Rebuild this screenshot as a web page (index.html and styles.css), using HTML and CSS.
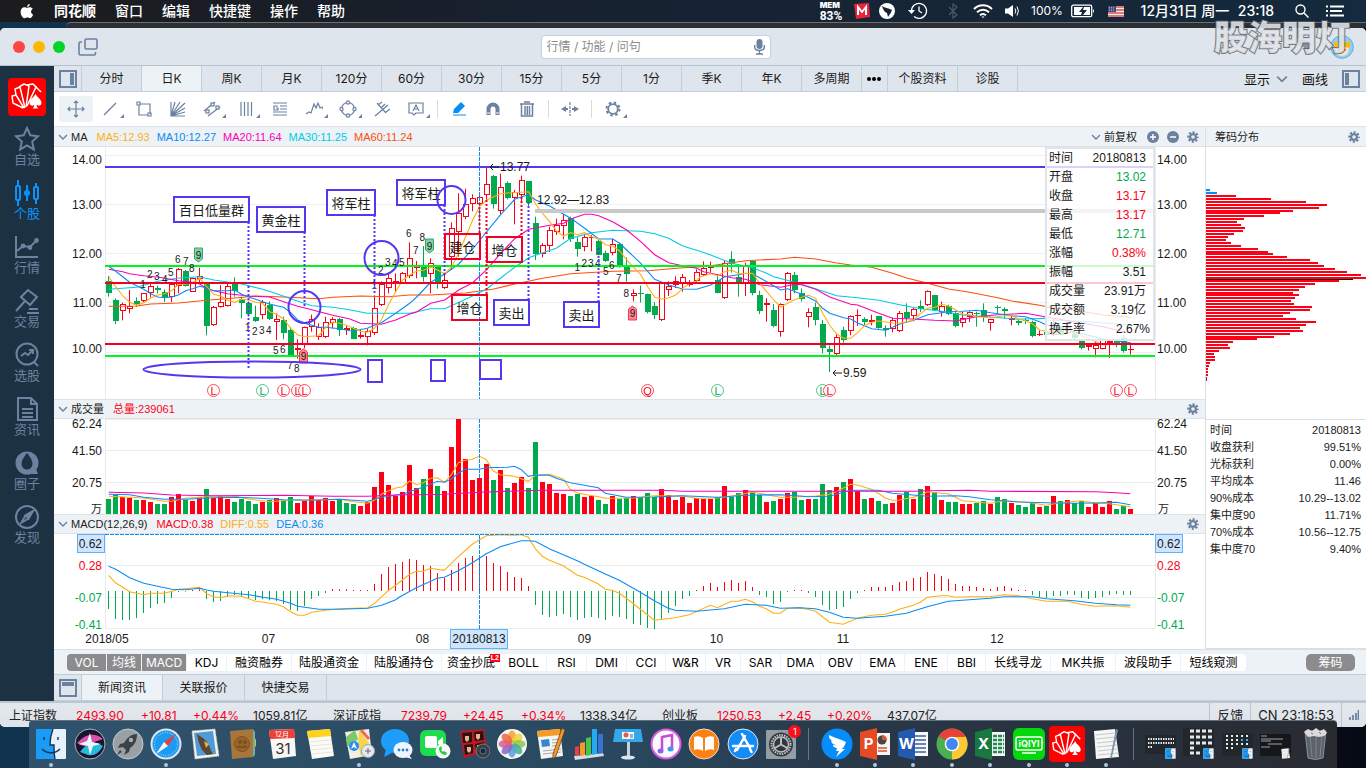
FILE: index.html
```html
<!DOCTYPE html>
<html lang="zh-CN">
<head>
<meta charset="utf-8">
<title>同花顺</title>
<link rel="stylesheet" href="styles.css">
</head>
<body>
<svg class="defs" width="0" height="0" aria-hidden="true">
  <symbol id="gear" viewBox="0 0 14 14"><circle cx="7" cy="7" r="3.4" fill="none" stroke="currentColor" stroke-width="2.6"/><circle cx="7" cy="7" r="5.6" fill="none" stroke="currentColor" stroke-width="2.4" stroke-dasharray="2.4 2" stroke-dashoffset="1.2"/></symbol>
  <symbol id="chev" viewBox="0 0 10 8"><path d="M1 2l4 4 4-4" fill="none" stroke="currentColor" stroke-width="1.4"/></symbol>
  <symbol id="cards" viewBox="0 0 38 38"><rect width="38" height="38" rx="4" fill="#fe0000"/><g fill="none" stroke="#fff" stroke-width="1.5" stroke-linejoin="round"><path d="M15 30L5 25l-1-7 4-1 8 13"/><path d="M8 17l-1-6 5-2 5 21"/><path d="M11 9l5-3 5 2-3 21"/><path d="M19 7l6-1 3 3-9 19"/><path d="M27 8l6 6"/></g><path fill="#fff" d="M27.500 16c2 4 6 5 6 9 0 3-4 3.500-5 1.500.2 2 1 3 2 4h-6c1-1 1.800-2 2-4-1 2-5 1.500-5-1.500 0-4 4-5 6-9z"/></symbol>
  <symbol id="finder" viewBox="0 0 32 32"><rect x="1" y="1" width="30" height="30" rx="1" fill="#e6f2fb"/><path d="M1 1h17c-2 5-3 10-3 16h4c0 5 0 9 1 14H1z" fill="#1a9bf5"/><path d="M18 1c-2 5-3 10-3 16h4c0 5 0 9 1 14M7 21c5 5 13 5 18 0M9 9v3M23 9v3" fill="none" stroke="#153450" stroke-width="1.400"/></symbol>
  <symbol id="notepad" viewBox="0 0 32 32"><path d="M4 3l21-2 4 28-23 2z" fill="#f6f6f4"/><path d="M6 7l19-2M6 11l20-2M7 15l20-2M7 19l20-2M8 23l19-2M8 27l20-2" stroke="#b9bcc0" stroke-width=".8"/><path d="M26 1l2 1-6 27-2 2z" fill="#7796ad"/></symbol>
</svg>

<header class="menubar">
  <nav class="menus">
    <svg class="apple" viewBox="0 0 14 16" width="14" height="16"><path fill="#fff" d="M9.800 1c.1 1.600-1.300 3-2.700 3C7 2.500 8.300 1.100 9.800 1zM7.200 4.800c.8 0 1.500-.6 2.700-.6 1.100 0 2.200.6 2.900 1.500-2.500 1.500-2.100 4.900.4 5.900-.7 1.800-1.800 3.600-3.100 3.600-1.100 0-1.400-.7-2.800-.7-1.300 0-1.700.7-2.700.7C2.700 15.200.6 12 .6 8.900.6 6 2.400 4.300 4.300 4.300c1.300 0 2.100.5 2.900.5z"/></svg>
    <a href="#" class="app">同花顺</a><a href="#">窗口</a><a href="#">编辑</a><a href="#">快捷键</a><a href="#">操作</a><a href="#">帮助</a>
  </nav>
  <div class="tray">
    <span class="mem"><b>MEM</b><b>83%</b></span>
    <svg width="16" height="16" viewBox="0 0 16 16"><path d="M0 1l15-1 1 14-14 2z" fill="#e8243c"/><path d="M4 12V4l4 5 4-5v8" fill="none" stroke="#fff" stroke-width="2"/></svg>
    <svg width="16" height="16" viewBox="0 0 16 16"><circle cx="8" cy="8" r="8" fill="#fff"/><path d="M3 3c3 2 6 2 10 4-1 2-1 3-2 4l-2 3-1-4c-3-1-4-4-5-7z" fill="#142232"/></svg>
    <svg width="20" height="18" viewBox="0 0 20 18"><path d="M3.500 9a7.500 7.500 0 1 1 2.500 5.500M11 4.500V9l3 2" fill="none" stroke="#fff" stroke-width="1.300"/><path d="M0 8h7l-3.500 4z" fill="#fff"/></svg>
    <svg width="12" height="16" viewBox="0 0 12 16"><path d="M2 4l8 8-4 3V1l4 3-8 8" fill="none" stroke="#4b5866" stroke-width="1.200"/></svg>
    <svg width="20" height="16" viewBox="0 0 20 16"><g fill="none" stroke="#fff" stroke-width="2"><path d="M1 6c5-5 13-5 18 0M4 9.300c3.500-3.400 8.500-3.400 12 0M7 12.300c1.800-1.600 4.200-1.600 6 0"/></g><path d="M8.500 13.500h3L10 15z" fill="#fff"/></svg>
    <svg width="14" height="14" viewBox="0 0 14 14"><path d="M0 4.500h3L8 1v12L3 9.500H0z" fill="#fff"/><path d="M10 4.500q1.600 2.500 0 5M12 2.500q2.800 4.500 0 9" fill="none" stroke="#fff"/></svg>
    <span class="pct">100%</span>
    <svg width="24" height="14" viewBox="0 0 24 14"><rect x=".7" y="1.200" width="20" height="11.500" rx="1.500" fill="none" stroke="#fff" stroke-width="1.300"/><path d="M3 3h9L8 8h3l-1 3H3zM13 3h6v8h-7l4-5h-4z" fill="#fff"/><path d="M22 5q2 2 0 4z" fill="#fff"/></svg>
    <svg width="16" height="11" viewBox="0 0 16 11"><rect width="16" height="11" fill="#f1eeee"/><path d="M0 1h16M0 4h16M0 7h16M0 10h16" stroke="#d1554f" stroke-width="1.500"/><rect width="8" height="6" fill="#42477e"/><path d="M1 1.500h6M1 3h6M1 4.500h6" stroke="#c5c8df" stroke-width=".7" stroke-dasharray="1 1"/></svg>
    <span class="date">12月31日 周一</span>
    <span class="date">23:18</span>
    <svg width="14" height="14" viewBox="0 0 14 14"><circle cx="5.500" cy="5.500" r="4.500" fill="none" stroke="#fff" stroke-width="1.400"/><path d="M9 9l4.500 4.500" stroke="#fff" stroke-width="1.500"/></svg>
    <svg width="18" height="12" viewBox="0 0 18 12"><path d="M0 1.500h2M0 6h2M0 10.500h2M4 1.500h14M4 6h12M4 10.500h14" stroke="#fff" stroke-width="1.800"/></svg>
  </div>
</header>
<div class="behind"></div>

<div class="window">
  <div class="titlebar">
    <div class="lights"><i class="close"></i><i class="min"></i><i class="max"></i>
      <svg width="20" height="18" viewBox="0 0 20 18"><g fill="none" stroke="#6c80a0" stroke-width="1.600"><rect x="7" y="1" width="12" height="10" rx="1.500"/><path d="M4 4H2.500Q1 4 1 5.500v10Q1 17 2.500 17H16q1.500 0 1.500-1.500V14"/></g></svg>
    </div>
    <label class="search"><input type="text" placeholder="行情 / 功能 / 问句" aria-label="搜索"><svg width="11" height="16" viewBox="0 0 11 16"><rect x="2.500" y="0" width="6" height="10" rx="3" fill="#6c80a0"/><path d="M.7 6v2q0 3.500 4.800 3.500T10.300 8V6M5.500 11v4M2 15h7" fill="none" stroke="#6c80a0" stroke-width="1.400"/></svg></label>
    <div class="account">
      <svg width="20" height="20" viewBox="0 0 20 20"><path d="M1 5l8-3 10 5-3 2-1 7h-4l-1-6-5-1z" fill="#8d8f99"/></svg>
      <svg width="24" height="24" viewBox="0 0 24 24"><circle cx="12" cy="12" r="11.300" fill="#8ed0f7" stroke="#5eaede"/><path d="M5 12h14q0 9-7 9t-7-9z" fill="#fbe1bd"/><path d="M4 13V6l4 2 4-4 4 4 4-2v7q-8-3-16 0z" fill="#ffb900"/><path d="M9 14v2M15 14v2" stroke="#6b4d2d"/></svg>
    </div>
  </div>

  <div class="body">
    <aside class="side">
      <svg class="logo" width="38" height="38"><use href="#cards"/></svg>
      <a href="#"><svg width="26" height="26" viewBox="0 0 26 26"><path d="M13 2l3.300 7.300 7.700.9-5.800 5.300 1.600 7.900-6.800-4-6.800 4 1.600-7.900L2 10.200l7.700-.9z"/></svg>自选</a>
      <a href="#" class="on"><svg width="26" height="26" viewBox="0 0 26 26"><path d="M4 0v6M4 20v6M22 3v4M22 19v5M13 5v16"/><rect x="2" y="6" width="4" height="14" rx="1"/><rect x="20" y="7" width="4" height="12" rx="1"/><circle cx="13" cy="13" r="2" fill="currentColor"/></svg>个股</a>
      <a href="#"><svg width="26" height="26" viewBox="0 0 26 26"><path d="M2 2v21h22M3 17l6-5 7 1 7-7"/><circle cx="9" cy="12" r="1.400" fill="currentColor"/><circle cx="16" cy="13.500" r="1.400" fill="currentColor"/><circle cx="22.500" cy="6.500" r="1.400" fill="currentColor"/></svg>行情</a>
      <a href="#"><svg width="26" height="26" viewBox="0 0 26 26"><path d="M7 9l7-7 9 7-7 8zM11 13L2 23M13 25h12M15 21h9"/></svg>交易</a>
      <a href="#"><svg width="26" height="26" viewBox="0 0 26 26"><circle cx="13" cy="12" r="10.500"/><path d="M20 20l4 4M7 14l4-3 3 2 5-5m-4 0h4v4"/></svg>选股</a>
      <a href="#"><svg width="26" height="26" viewBox="0 0 26 26"><path d="M4 2h13l6 6v16H4zM17 2v6h6M8 13h11M8 17h11M8 21h11"/></svg>资讯</a>
      <a href="#"><svg width="26" height="26" viewBox="0 0 26 26"><circle cx="13" cy="13" r="11.500" fill="currentColor" stroke="none"/><path d="M17 24h7l-2-5z" fill="currentColor" stroke="none"/><path d="M13 3c4 5 5.500 8 5.500 11a5.500 5.500 0 0 1-11 0C7.500 11 9 8 13 3z" fill="#1c3242" stroke="none"/></svg>圈子</a>
      <a href="#"><svg width="26" height="26" viewBox="0 0 26 26"><circle cx="13" cy="13" r="11"/><path d="M18.500 7.500l-4 7-7 4 4-7z"/><path d="M18.500 7.500l-4 7-3-3z" fill="currentColor"/></svg>发现</a>
    </aside>

    <main class="main">
      <nav class="tabs">
        <button class="pane" aria-label="右侧栏"><svg width="18" height="18" viewBox="0 0 18 18"><rect x="1" y="1" width="16" height="16" fill="none" stroke="#6c80a0" stroke-width="2"/><rect x="11" y="3" width="4" height="12" fill="#6c80a0"/></svg></button>
        <button>分时</button><button class="on">日K</button><button>周K</button><button>月K</button><button>120分</button><button>60分</button><button>30分</button><button>15分</button><button>5分</button><button>1分</button><button>季K</button><button>年K</button><button>多周期</button><button class="more" aria-label="更多"><svg width="16" height="6" viewBox="0 0 16 6"><circle cx="3" cy="3" r="2"/><circle cx="8" cy="3" r="2"/><circle cx="13" cy="3" r="2"/></svg></button><button class="wide">个股资料</button><button>诊股</button>
        <span class="tools-right"><button>显示 <svg width="12" height="10"><use href="#chev"/></svg></button><button>画线</button><button aria-label="左侧栏"><svg width="18" height="18" viewBox="0 0 18 18"><rect x="1" y="1" width="16" height="16" fill="none" stroke="#6c80a0" stroke-width="2"/><rect x="3" y="3" width="4" height="12" fill="#6c80a0"/></svg></button></span>
      </nav>

      <div class="toolbar">
        <button class="on" aria-label="移动"><svg viewBox="0 0 18 18"><path d="M9 1v16M1 9h16M7 3l2-2 2 2M7 15l2 2 2-2M3 7L1 9l2 2M15 7l2 2-2 2"/></svg></button>
        <button class="dd" aria-label="直线"><svg viewBox="0 0 18 18"><path d="M3 15L15 3"/></svg></button>
        <button aria-label="矩形"><svg viewBox="0 0 18 18"><path d="M5 4h10v10M13 15H4V5M2 2h3v3H2zM13 13h3v3h-3z"/></svg></button>
        <button aria-label="扇形"><svg viewBox="0 0 18 18"><path d="M2 2v14h14M2 16L6 2M2 16l9-14M2 16L16 3M2 16l14-8M2 16l14-4"/></svg></button>
        <button class="dd" aria-label="通道"><svg viewBox="0 0 18 18"><path d="M1 11l11-9M5 16L17 7"/><rect x="8" y="3" width="3" height="3" fill="#fff"/><rect x="13" y="6" width="3" height="3" fill="#fff"/><rect x="3" y="10" width="3" height="3" fill="#fff"/></svg></button>
        <button class="dd" aria-label="周期线"><svg viewBox="0 0 18 18"><path d="M4 2v14M7.500 2v14M11 2v14M14.500 2v14"/></svg></button>
        <button aria-label="分割"><svg viewBox="0 0 18 18"><path d="M2 3h14M9 6h7M9 9h7M2 12h14M2 15h14M7 6H3v4h4V8H5"/></svg></button>
        <button class="dd" aria-label="波浪"><svg viewBox="0 0 18 18"><path d="M1 14l3-2 2 1 3-9 2 4 2-5 2 5 2-1 1 2"/></svg></button>
        <button class="dd" aria-label="圆"><svg viewBox="0 0 18 18"><circle cx="9" cy="9" r="6.500"/><g fill="#fff"><circle cx="2.500" cy="9" r="1.600"/><circle cx="15.500" cy="9" r="1.600"/><circle cx="9" cy="2.500" r="1.600"/><circle cx="9" cy="15.500" r="1.600"/></g></svg></button>
        <button aria-label="叉线"><svg viewBox="0 0 18 18"><path d="M2 16L15 5M4 3l9 10M5 5l4-3M8 8l4-4M13 12l4-3"/></svg></button>
        <button class="dd" aria-label="文字"><svg viewBox="0 0 18 18"><path d="M2 3h14v10H9l-2 2-2-2H2zM6 11l3-6 3 6M7 9h4"/></svg></button>
        <hr>
        <button class="pen" aria-label="画笔"><svg viewBox="0 0 18 18"><path d="M3 13l1-4 7-7 4 4-7 7z" fill="currentColor" stroke="none"/><path d="M3 15h13"/></svg></button>
        <button aria-label="磁铁"><svg viewBox="0 0 18 18"><path d="M4.500 15V9a4.500 4.500 0 0 1 9 0v6" stroke-width="4"/><path d="M3 13h3M12 13h3" stroke="#fff"/></svg></button>
        <button aria-label="删除"><svg viewBox="0 0 18 18"><path d="M2 4h14M6 2h6M3.500 4v12h11V4M7 6v9M9.300 6v9M11.500 6v9" stroke-width="1.500"/></svg></button>
        <hr>
        <button aria-label="压缩"><svg viewBox="0 0 18 18"><path d="M9 2v14" stroke-dasharray="3 1"/><path d="M0 9l5-3v2h2v2H5v2zM18 9l-5-3v2h-2v2h2v2z" fill="currentColor" stroke="none"/></svg></button>
        <hr>
        <button class="dd" aria-label="设置"><svg viewBox="0 0 18 18"><circle cx="9" cy="9" r="4.800" stroke-width="1.800"/><circle cx="9" cy="9" r="6.500" stroke-width="2" stroke-dasharray="2.500 2.600"/></svg></button>
      </div>

      <div class="board">
        <section class="charts">
          <div class="head first"><svg width="10" height="8"><use href="#chev"/></svg><b class="name">MA</b><span class="c5">MA5:12.93</span><span class="c10">MA10:12.27</span><span class="c20">MA20:11.64</span><span class="c30">MA30:11.25</span><span class="c60">MA60:11.24</span>
            <span class="ops"><svg width="10" height="8"><use href="#chev"/></svg><span class="fq">前复权</span><svg width="12" height="12" viewBox="0 0 12 12"><circle cx="6" cy="6" r="6" fill="currentColor"/><path d="M6 3v6M3 6h6" stroke="#fff" stroke-width="1.500"/></svg><svg width="12" height="12" viewBox="0 0 12 12"><circle cx="6" cy="6" r="6" fill="currentColor"/><path d="M3 6h6" stroke="#fff" stroke-width="1.500"/></svg><svg width="12" height="12"><use href="#gear"/></svg></span></div>
          <div class="price">
            <svg id="price" class="plot" viewBox="54 147 1151 252"></svg>
            <table class="tip">
              <tr><th>时间</th><td>20180813</td></tr>
              <tr><th>开盘</th><td class="dn">13.02</td></tr>
              <tr><th>收盘</th><td class="up">13.17</td></tr>
              <tr><th>最高</th><td class="up">13.17</td></tr>
              <tr><th>最低</th><td class="dn">12.71</td></tr>
              <tr><th>涨幅</th><td class="up">0.38%</td></tr>
              <tr><th>振幅</th><td>3.51</td></tr>
              <tr><th>成交量</th><td>23.91万</td></tr>
              <tr><th>成交额</th><td>3.19亿</td></tr>
              <tr><th>换手率</th><td>2.67%</td></tr>
            </table>
          </div>
          <div class="head"><svg width="10" height="8"><use href="#chev"/></svg><b class="name">成交量</b><span class="up">总量:239061</span><span class="ops"><svg width="12" height="12"><use href="#gear"/></svg></span></div>
          <svg id="volume" class="plot" viewBox="54 419 1151 95"></svg>
          <div class="head"><svg width="10" height="8"><use href="#chev"/></svg><b class="name">MACD(12,26,9)</b><span class="up">MACD:0.38</span><span class="c5">DIFF:0.55</span><span class="c10">DEA:0.36</span><span class="ops"><svg width="12" height="12"><use href="#gear"/></svg></span></div>
          <svg id="macd" class="plot" viewBox="54 534 1151 115"></svg>
        </section>
        <section class="chips">
          <div class="head first"><span class="title">筹码分布</span><span class="ops"><svg width="12" height="12"><use href="#gear"/></svg></span></div>
          <svg id="chips" class="plot" viewBox="1206 147 160 272"></svg>
          <table class="stats">
            <tr><th>时间</th><td>20180813</td></tr>
            <tr><th>收盘获利</th><td>99.51%</td></tr>
            <tr><th>光标获利</th><td>0.00%</td></tr>
            <tr><th>平均成本</th><td>11.46</td></tr>
            <tr><th>90%成本</th><td>10.29--13.02</td></tr>
            <tr><th>集中度90</th><td>11.71%</td></tr>
            <tr><th>70%成本</th><td>10.56--12.75</td></tr>
            <tr><th>集中度70</th><td>9.40%</td></tr>
          </table>
        </section>
      </div>

      <div class="indicators">
        <div class="list"><button class="on l">VOL</button><button class="on">均线</button><button class="on">MACD</button><button>KDJ</button><button>融资融券</button><button>陆股通资金</button><button>陆股通持仓</button><button class="hot">资金抄底<i>L2</i></button><button>BOLL</button><button>RSI</button><button>DMI</button><button>CCI</button><button>W&amp;R</button><button>VR</button><button>SAR</button><button>DMA</button><button>OBV</button><button>EMA</button><button>ENE</button><button>BBI</button><button>长线寻龙</button><button>MK共振</button><button>波段助手</button><button class="r">短线窥测</button></div>
        <button class="chip-btn">筹码</button>
      </div>
      <nav class="tabs news"><button class="pane" aria-label="展开"><svg width="18" height="18" viewBox="0 0 18 18"><rect x="1" y="1" width="16" height="16" fill="none" stroke="#6c80a0" stroke-width="2"/><rect x="3" y="3" width="12" height="4" fill="#6c80a0"/></svg></button><button class="on">新闻资讯</button><button>关联报价</button><button>快捷交易</button></nav>
    </main>
  </div>

  <footer class="status">
    <div class="quotes"><span>上证指数</span><span class="up">2493.90</span><span class="up">+10.81</span><span class="up">+0.44%</span><span>1059.81亿</span><span>深证成指</span><span class="up">7239.79</span><span class="up">+24.45</span><span class="up">+0.34%</span><span>1338.34亿</span><span>创业板</span><span class="up">1250.53</span><span class="up">+2.45</span><span class="up">+0.20%</span><span>437.07亿</span></div>
    <a href="#" class="cell">反馈</a><span class="cell">CN 23:18:53</span><span class="cell"><svg width="10" height="10" viewBox="0 0 10 10"><path d="M1 10V7M4 10V5M7 10V3M9.500 10V0" stroke="#6c80a0" stroke-width="1.800"/></svg></span>
  </footer>
</div>

<div class="watermark">股海明灯</div>

<div class="dock">
  <span class="run"><svg><use href="#finder"/></svg></span>
  <span><svg viewBox="0 0 32 32"><circle cx="16" cy="16" r="15" fill="#17162c" stroke="#aeb4c4"/><path d="M3 15q13-14 26-4-8 2-13 6Q9 20 3 15z" fill="#dd4fae"/><path d="M6 24q10-14 23-6-6 11-15 9z" fill="#29b9d9"/><path d="M16 5l2 9 9 2-8 2-3 9-2-9-9-2 8-3z" fill="#e9f9ff"/></svg></span>
  <span><svg viewBox="0 0 32 32"><circle cx="16" cy="16" r="15" fill="#9aa1a5" stroke="#c5cacc"/><path d="M25 6c-6 0-10 4-13 9l-4 1-2 4 5-1 3 3-2 5 5-3 1-4c5-3 7-8 7-14zM8 22l-3 5 5-3z" fill="#3b4145"/><circle cx="19" cy="12" r="2.200" fill="#a8afb3"/></svg></span>
  <span class="run"><svg viewBox="0 0 32 32"><circle cx="16" cy="16" r="14.500" fill="#1d9bf0" stroke="#dfe5ea" stroke-width="2"/><circle cx="16" cy="16" r="11.500" fill="none" stroke="#bfe4fc" stroke-dasharray="1 1.500"/><path d="M26 6L14 14l4 4z" fill="#f23b36"/><path d="M6 26l8-12 4 4z" fill="#f4f6f8"/></svg></span>
  <span><svg viewBox="0 0 32 32"><path d="M3 3l23-2 4 27-24 3z" fill="#f4f2ea" stroke="#c9c9c0" stroke-dasharray="1.500 1"/><path d="M5 5l19-2 3 23-19 2z" fill="#4e9bd8"/><path d="M8 6c4 3 7 4 10 8 3 4 3 8 6 12l-6 1-5-5c-2-4-4-9-5-16z" fill="#5b4630"/><path d="M15 13l5 3-3 4z" fill="#e6b255"/></svg></span>
  <span><svg viewBox="0 0 32 32"><path d="M3 3l23-2v28L5 31z" fill="#a8753a"/><path d="M26 1l2 3v23l-2 2z" fill="#6ab4a4"/><path d="M28 10l1 2v6l-1 1z" fill="#e5b43e"/><circle cx="15" cy="16" r="7.500" fill="#966529" stroke="#815420"/><circle cx="13" cy="14" r="2" fill="#7b4f1f"/><circle cx="18" cy="14" r="2" fill="#7b4f1f"/><path d="M9 20q3-5 6-1 3-4 6 1z" fill="#7b4f1f"/></svg></span>
  <span><svg viewBox="0 0 32 32"><path d="M3 2l25-1 2 27-23 3z" fill="#f7f7f7"/><path d="M3 2l25-1 1 9-25 1z" fill="#ee4037"/><text x="16" y="9" class="t7">12月</text><text x="17" y="26" class="t16">31</text></svg></span>
  <span><svg viewBox="0 0 32 32"><path d="M3 3l23-2 4 27-22 3z" fill="#fbfaf5"/><path d="M3 3l23-2 1 7-23 2z" fill="#ffd21d"/><path d="M5 14l22-2M6 18l22-2M6 22l22-2M7 26l22-2" stroke="#ddd" stroke-width=".7"/></svg></span>
  <span class="run"><svg viewBox="0 0 32 32"><path d="M2 4l24-3 3 26-22 4z" fill="#f2efe2"/><path d="M3 9l9-7 3 9-5 5-6 3z" fill="#7acb68"/><path d="M16 2l10 13-8 14-3-13z" fill="#f6d54c"/><path d="M18 2l8 9" stroke="#ee6b5a" stroke-width="3"/><circle cx="11" cy="18" r="5" fill="#2e8df1"/><path d="M11 14l3 7-3-2-3 2z" fill="#fff"/><circle cx="25" cy="23" r="6.500" fill="#e6e9ed" stroke="#9da7b0"/><path d="M22 23h6M25 20v6" stroke="#667"/></svg></span>
  <span><svg viewBox="0 0 32 32"><ellipse cx="14" cy="13" rx="14" ry="12" fill="#1e9dfa"/><path d="M5 21l-2 8 8-4z" fill="#1e9dfa"/><ellipse cx="22" cy="22" rx="9.500" ry="8" fill="#eef4fb"/><path d="M28 27l3 4-7-2z" fill="#eef4fb"/><g fill="#2c80d0"><circle cx="18" cy="22" r="1.400"/><circle cx="22" cy="22" r="1.400"/><circle cx="26" cy="22" r="1.400"/></g></svg></span>
  <span><svg viewBox="0 0 32 32"><rect x="1" y="2" width="26" height="26" rx="6" fill="#1fdc4d"/><rect x="6" y="8" width="12" height="12" rx="2" fill="#fff"/><path d="M19 13l5-4v10l-5-3z" fill="#fff"/><circle cx="24" cy="23" r="7.500" fill="#f6f8f6"/><path d="M20 20c0 4 3 7 7 7l1-2-3-2-1 1-2-2 1-1-1-3z" fill="#1eca47"/></svg></span>
  <span><svg viewBox="0 0 32 32"><path d="M2 3l24-2 3 22-23 7z" fill="#c01822"/><g fill="#2b1310"><path d="M4 5l10-1v10l-9 1zM16 4l9-1 1 9-9 1zM6 17l9-1v9l-8 2zM17 16l9-2v9l-8 1z"/></g><g fill="#e9b299"><path d="M7 8h4v4l-2 2-2-2zM18 6h4v4l-2 2-2-2zM9 19h4v4l-2 2-2-2zM19 17h4v4h-4z"/></g><circle cx="25" cy="23" r="7" fill="#393c42" stroke="#787c83"/><circle cx="25" cy="23" r="3" fill="#14283c" stroke="#56728a"/></svg></span>
  <span><svg viewBox="0 0 32 32"><circle cx="16" cy="16" r="15" fill="#f6f5f3"/><g fill-opacity=".85"><ellipse cx="16" cy="9" rx="4" ry="6.500" fill="#f6a02c"/><ellipse cx="16" cy="9" rx="4" ry="6.500" fill="#ecd532" transform="rotate(45 16 16)"/><ellipse cx="16" cy="9" rx="4" ry="6.500" fill="#8fc850" transform="rotate(90 16 16)"/><ellipse cx="16" cy="9" rx="4" ry="6.500" fill="#41b489" transform="rotate(135 16 16)"/><ellipse cx="16" cy="9" rx="4" ry="6.500" fill="#5b9de0" transform="rotate(180 16 16)"/><ellipse cx="16" cy="9" rx="4" ry="6.500" fill="#8367c2" transform="rotate(225 16 16)"/><ellipse cx="16" cy="9" rx="4" ry="6.500" fill="#d15ca0" transform="rotate(270 16 16)"/><ellipse cx="16" cy="9" rx="4" ry="6.500" fill="#ef6547" transform="rotate(315 16 16)"/></g></svg></span>
  <span><svg viewBox="0 0 32 32"><path d="M2 3l23-2 3 27-22 3z" fill="#f4f4f1"/><path d="M2 3l23-2 1 6-23 2z" fill="#f49b2a"/><path d="M6 12l8-1 1 7-8 1z" fill="#3585d0"/><path d="M17 12l8-1M17 15l8-1M17 18l8-1M8 23l18-2M8 26l18-2" stroke="#aaa"/><path d="M27 0l3 2-9 26-3 3v-5z" fill="#f19829" stroke="#593817" stroke-width=".7"/></svg></span>
  <span><svg viewBox="0 0 32 32"><path d="M1 28l29-3 1 3-29 4z" fill="#d6dce0"/><path d="M2 19l4-1v9l-4 1z" fill="#ef3c48"/><path d="M7 15l5-1v13l-5 1z" fill="#f99822"/><path d="M13 10l5-1v18l-5 1z" fill="#43c64d"/><path d="M19 1l5 0v25l-5 1z" fill="#24aaf2"/><path d="M25 6l5 0v19l-5 1z" fill="#3971d3"/></svg></span>
  <span><svg viewBox="0 0 32 32"><path d="M3 1h26l2 13H1z" fill="#36a8ea"/><path d="M10 4h12v7H10z" fill="#f3f8fa"/><circle cx="14" cy="7" r="2.500" fill="#e65a56"/><path d="M18 7h3M18 9h3" stroke="#36a"/><path d="M15 14h3v14h-3z" fill="#c8d4db"/><ellipse cx="16" cy="29.500" rx="7" ry="2" fill="#dce5ea"/></svg></span>
  <span><svg viewBox="0 0 32 32"><circle cx="16" cy="16" r="14.500" fill="#fbf9fd" stroke="#d65be0" stroke-width="2"/><path d="M12 23V9l10-2v14" fill="none" stroke="#c34bd8" stroke-width="2.500"/><ellipse cx="10.500" cy="23" rx="3" ry="2.500" fill="#8b62ef"/><ellipse cx="20.500" cy="21" rx="3" ry="2.500" fill="#3f9bea"/></svg></span>
  <span><svg viewBox="0 0 32 32"><circle cx="16" cy="16" r="15" fill="#fc8113" stroke="#eee1d5"/><path d="M15 23V10Q11 7 6 9v13q5-2 9 1zM17 23V10q4-3 9-1v13q-5-2-9 1z" fill="#fff"/></svg></span>
  <span><svg viewBox="0 0 32 32"><circle cx="16" cy="16" r="15" fill="#148cf7" stroke="#dbe9f4"/><path d="M15 6l8 14M18 8L10 22M6 18h13M21 18h5M8 23l1-2M23 21l1.500 3" fill="none" stroke="#fff" stroke-width="2.500" stroke-linecap="round"/></svg></span>
  <span class="badge"><svg viewBox="0 0 32 32"><rect x="1" y="2" width="30" height="29" rx="1" fill="#929da4"/><circle cx="16" cy="16.500" r="12" fill="#31373b"/><circle cx="16" cy="16.500" r="9.500" fill="none" stroke="#bbc0c4" stroke-width="2" stroke-dasharray="1.500 1"/><circle cx="16" cy="16.500" r="7.500" fill="none" stroke="#bbc0c4" stroke-width="1.500"/><path d="M16 16.500V9M16 16.500l-7 4M16 16.500l7 4" stroke="#bbc0c4" stroke-width="2"/></svg><i>1</i></span>
  <hr>
  <span class="run"><svg viewBox="0 0 32 32"><circle cx="16" cy="16" r="15.500" fill="#078dfb"/><path d="M8 7c6 3 11 4 17 7-1 3-2 5-4 7h3l-9 8 3-6h-3l1-3c-4-1-4-2-4-3l3 .5c-4-2-4-2-5-5l4 1C8 12 8 10 8 7z" fill="#fff"/></svg></span>
  <span class="run"><svg viewBox="0 0 32 32"><path d="M17 5h14v22H17z" fill="#f7f4f3"/><circle cx="23" cy="12" r="4.500" fill="#464646"/><path d="M23 12V7a5 5 0 0 1 5 5z" fill="#dc5634"/><path d="M19 20h9M19 23h9" stroke="#db4f2d" stroke-width="1.500"/><path d="M1 4l17-4v32L1 28z" fill="#e64a23"/><text x="9.500" y="21" class="office">P</text></svg></span>
  <span class="run"><svg viewBox="0 0 32 32"><path d="M17 4h14v24H17z" fill="#f8f8fb"/><path d="M18 8h11M18 12h11M18 16h11M18 20h11M18 24h11" stroke="#3b5da3" stroke-width="1.500"/><path d="M1 4l17-4v32L1 28z" fill="#2459b0"/><text x="9.500" y="21" class="office">W</text></svg></span>
  <span class="run"><svg viewBox="0 0 32 32"><circle cx="16" cy="16" r="15.500" fill="#4caf50"/><path d="M16 16L2.600 8.200A15.500 15.500 0 0 1 29.400 8.200z" fill="#e54335"/><path d="M16 16L29.400 8.200A15.500 15.500 0 0 1 16 31.500z" fill="#fcc934"/><path d="M16 9h14L16 31.500l6-13z" fill="#fcc934"/><circle cx="16" cy="16" r="7.300" fill="#fff"/><circle cx="16" cy="16" r="5.900" fill="#4285f4"/></svg></span>
  <span class="run"><svg viewBox="0 0 32 32"><path d="M17 4h14v24H17z" fill="#f3f8f5"/><path d="M19 8h11M19 12h11M19 16h11M19 20h11M19 24h11" stroke="#208951" stroke-width="2.500" stroke-dasharray="4 1"/><path d="M1 4l17-4v32L1 28z" fill="#19783f"/><text x="9.500" y="21" class="office">X</text></svg></span>
  <span class="run"><svg viewBox="0 0 32 32"><rect width="32" height="32" rx="6" fill="#05d70d"/><rect x="3" y="9" width="26" height="13" rx="2" fill="none" stroke="#fff" stroke-width="1.500"/><path d="M9 25h14" stroke="#fff" stroke-width="1.500"/><text x="16" y="19" class="iq">iQIYI</text></svg></span>
  <span class="run big"><svg><use href="#cards"/></svg></span>
  <span class="run"><svg><use href="#notepad"/></svg></span>
  <hr>
  <span><svg viewBox="0 0 32 32"><rect y="7" width="31" height="19" fill="#22272c"/><path d="M3 11h26M3 15h26M3 19h5" stroke="#e5e9ed" stroke-width="2" stroke-dasharray="1.500 1"/><use href="#finder" x="20" y="20" width="11" height="11"/></svg></span>
  <span><svg viewBox="0 0 32 32"><rect y="0" width="31" height="28" fill="#22272c"/><path d="M7 3h23M7 9h23M7 15h23M7 20h4M7 25h12" stroke="#e5e9ed" stroke-width="3" stroke-dasharray="4 2"/><use href="#finder" x="20" y="20" width="11" height="11"/></svg></span>
  <span><svg viewBox="0 0 32 32"><rect y="5" width="31" height="23" fill="#22272c"/><path d="M4 8h25M4 12h25M4 16h25M4 20h8" stroke="#e5e9ed" stroke-width="2" stroke-dasharray="2 3"/><path d="M19 12h10" stroke="#1db7ff" stroke-width="2" stroke-dasharray="2 3"/><use href="#finder" x="20" y="20" width="11" height="11"/></svg></span>
  <span><svg viewBox="0 0 32 32"><rect y="6" width="31" height="22" fill="#15181b"/><path d="M1 8h6M1 11h22M1 13h10M8 16h14M1 19h9" stroke="#9ea3a8"/><use href="#notepad" x="20" y="20" width="11" height="11"/></svg></span>
  <span><svg viewBox="0 0 32 32"><path d="M6 3h21l-3 27q-8 3-15 0z" fill="#5b6268" stroke="#8a9299"/><path d="M11 7l2 22M17 7v23M23 7l-2 22" stroke="#7f878d"/><path d="M5 4l4-3 4 2 4-3 4 3 4-2 3 4-3 3-5 1-5-1-6 1z" fill="#d9dadd"/><path d="M12 5l2 1M20 4l2 2" stroke="#c4524e"/></svg></span>
</div>
<script src="charts.js"></script>
</body>
</html>
```
FILE: styles.css
```css
* { box-sizing: border-box; }
body {
  margin: 0; min-height: 100vh; display: flex; flex-direction: column; position: relative;
  background: linear-gradient(90deg, #10344f, #07182a 60%, #060a14);
  font: 12px/16px Inter, "Noto Sans CJK SC", sans-serif; color: #1a1a1a;
}
.defs { position: absolute; }
button { font: inherit; color: inherit; border: 0; padding: 0; margin: 0; background: none; white-space: nowrap; }
a { color: inherit; text-decoration: none; }
i { font-style: normal; }
svg { display: block; flex: none; }
.up { color: #fe0016; }
.dn { color: #00ab4e; }

.menubar { height: 22px; display: flex; justify-content: space-between; align-items: center; padding: 0 23px 0 20px; color: #fff; background: linear-gradient(90deg, #1b1b1d, #17212f 40%, #152a3e); font-size: 14px; }
.menus { display: flex; gap: 19px; align-items: center; font-weight: 500; }
.apple { margin-right: 1px; }
.app { font-weight: 700; }
.tray { display: grid; grid-template-columns: 32px 30px 20px 42px 28px 32px 26px 44px 28px 38px 100px 42px 50px 16px; align-items: center; justify-items: center; }
.mem { display: flex; flex-direction: column; font: 12px/12px Roboto, sans-serif; }
.mem b:first-child { font: 900 8px/9px Inter, sans-serif; }
.pct { font-size: 12px; }
.date { font-size: 14px; font-weight: 500; white-space: nowrap; }
.behind { height: 6px; margin-left: 66px; background: #2b2f33; border-top: 1px solid #6d7072; border-radius: 5px 0 0 0; }

.window { display: flex; flex-direction: column; margin-bottom: 41px; background: #fff; border-radius: 5px; overflow: hidden; }
.titlebar { height: 38px; display: grid; grid-template-columns: 1fr 229px 1fr; align-items: center; background: #dee5ed; border-bottom: 1px solid #b5c3d1; }
.lights { display: flex; align-items: center; gap: 8px; padding-left: 13px; }
.lights i { width: 12px; height: 12px; border-radius: 50%; }
.lights svg { margin-left: 5px; }
.close { background: #fd4641; }
.min { background: #fdb902; }
.max { background: #03d425; }
.search { display: flex; align-items: center; height: 24px; background: #fff; border: 1px solid #c3d0dd; border-radius: 4px; padding: 0 5px; margin-left: -28px; width: 230px; }
.search input { flex: 1; min-width: 0; border: 0; outline: 0; padding: 0; font: inherit; background: none; }
.search input::placeholder { color: #8c8c8c; opacity: 1; }
.account { display: flex; align-items: center; justify-content: flex-end; gap: 16px; padding-right: 12px; }

.body { display: flex; }
.side { width: 54px; flex: none; background: #1c3242; color: #6f819f; display: flex; flex-direction: column; align-items: center; padding-top: 12px; font-size: 13px; }
.logo { margin-bottom: 10px; }
.side a { height: 54px; display: flex; flex-direction: column; align-items: center; line-height: 14px; }
.side a svg { fill: none; stroke: currentColor; stroke-width: 2; }
.side .on { color: #0d92fb; }
.main { flex: 1; min-width: 0; }

.tabs { height: 26px; display: flex; background: #dee5ed; border-bottom: 1px solid #c0ceda; }
.tabs > button { width: 60px; border-right: 1px solid #c0ceda; }
.tabs > .pane { width: 28px; padding-left: 5px; }
.tabs > .more { width: 26px; padding-left: 4px; }
.tabs > .wide { width: 70px; }
.tabs .on { background: #edf2f6; }
.tools-right { margin-left: auto; display: flex; align-items: center; gap: 14px; padding-right: 6px; font-size: 13px; color: #111; }
.tools-right button { display: flex; align-items: center; gap: 6px; }
.tools-right svg { color: #6c80a0; }

.toolbar { height: 34px; display: flex; align-items: center; padding-left: 5px; color: #6c80a0; background: #fff; }
.toolbar button { width: 34px; height: 26px; display: flex; align-items: center; justify-content: center; position: relative; }
.toolbar svg { width: 18px; height: 18px; fill: none; stroke: currentColor; stroke-width: 1.200; }
.toolbar .on { background: #edf2f6; border-radius: 3px; }
.toolbar .pen { color: #0a8cf5; }
.toolbar .dd::after { content: ""; position: absolute; right: 3px; bottom: 4px; border: 2px solid transparent; border-right-color: #6c80a0; border-bottom-color: #6c80a0; }
.toolbar hr { width: 1px; height: 18px; border: 0; margin: 0 4px; background: #d5dbe1; }

.board { display: grid; grid-template-columns: 1fr 161px; }
.charts { min-width: 0; font-family: "Liberation Sans", "Noto Sans CJK SC", sans-serif; }
.head { height: 20px; display: flex; align-items: center; gap: 7px; padding: 0 6px 0 4px; background: #edf2f6; border: solid #dee2e6; border-width: 1px 0; font: 11px/16px "Liberation Sans", "Noto Sans CJK SC", sans-serif; color: #6c80a0; }
.head.first { height: 21px; }
.head svg { color: #6c80a0; }
.head > svg { margin-right: -4px; }
.head .name { font-weight: 400; color: #222; margin-right: 2px; }
.head .title, .head .fq { color: #222; }
.head .fq { margin-left: -5px; margin-right: 2px; }
.head .up { color: #fe0016; }
.head .c5 { color: #ffaf13; }
.head .c10 { color: #0a8cf5; }
.head .c20 { color: #fb00b4; }
.head .c30 { color: #00cbe6; }
.head .c60 { color: #ff4d0b; }
.ops { margin-left: auto; display: flex; align-items: center; gap: 8px; }
.plot { width: 100%; height: auto; overflow: visible; font: 12px "Liberation Sans", "Noto Sans CJK SC", sans-serif; }
.price { position: relative; }
.tip { position: absolute; top: 0; right: 50px; width: 110px; border: 2px solid #dfe5eb; background: rgba(255, 255, 255, .78); border-collapse: separate; border-spacing: 0; font-size: 12px; }
.tip tr { height: 19px; }
.tip th, .tip td, .stats th, .stats td { padding: 0; font-weight: 400; text-align: left; white-space: nowrap; line-height: 17px; }
.tip th { padding-left: 2px; }
.tip td { text-align: right; padding-right: 7px; }
.tip tr:last-child td { padding-right: 3px; }
.chips { border-left: 1px solid #dadfe4; border-bottom: 1px solid #dadfe4; }
.chips .head { padding: 0 6px 0 9px; }
.stats { width: 100%; border-top: 1px solid #dadfe4; padding: 2px 5px 0 4px; border-spacing: 0; font: 11px/17px "Liberation Sans", "Noto Sans CJK SC", sans-serif; }
.stats td { text-align: right; }

.indicators { height: 26px; display: flex; align-items: center; justify-content: space-between; padding: 0 11px 0 13px; background: #edf2f6; border-top: 1px solid #dadfe4; border-bottom: 1px solid #c0ceda; color: #000; }
.list { display: grid; gap: 1px; height: 17px; grid-template-columns: 39px 34px 44px 39px 64px 74px 74px 58px 45px 39px 39px 38px 39px 34px 39px 39px 39px 43px 42px 37px 64px 64px 64px 65px; }
.list button { background: #fff; line-height: 17px; font-size: 12px; }
.list .on { background: #8c8c8e; color: #fff; }
.list .l { border-radius: 4px 0 0 4px; }
.list .r { border-radius: 0 4px 4px 0; }
.list .hot { position: relative; }
.hot i { position: absolute; right: 0; top: 0; background: #fe0016; color: #fff; font: 700 7px/8px "Liberation Sans", sans-serif; padding: 0 1px; }
.chip-btn { width: 49px; height: 17px; line-height: 17px; border-radius: 5px; background: #8c8c8e; color: #fff; }
.news > button { width: 82px; }
.news > .on { width: 81px; }

.status { height: 26px; border-top: 2px solid #bac6d1; background: linear-gradient(#e3e8ed, #dde3ea); display: flex; font-size: 12px; line-height: 25px; color: #222; }
.quotes { flex: 1; padding-left: 9px; display: grid; white-space: nowrap; grid-template-columns: 67px 65px 52px 60px 80px 68px 62px 58px 59px 82px 55px 61px 49px 60px 1fr; }
.cell { border-left: 1px solid #bbc5cf; padding: 0 7px; display: flex; align-items: center; font-size: 13px; }
.cell:last-child { padding: 0 7px; }

.watermark { position: absolute; right: 16px; top: 14px; font: 900 34px/44px "Noto Sans CJK SC", sans-serif; color: rgba(226, 229, 233, .9); -webkit-text-stroke: 2px rgba(85, 90, 96, .8); paint-order: stroke fill; }

.dock { position: absolute; left: 29px; right: 29px; bottom: 0; height: 48px; display: flex; align-items: center; padding: 0 3px 2px; border-radius: 4px 4px 0 0; border-top: 1px solid #60717e; background: linear-gradient(90deg, #30536d, #294860 45%, #283747 65%, #292b31); }
.dock span { flex: 1; display: flex; justify-content: center; position: relative; }
.dock span svg { width: 32px; height: 32px; }
.dock .big svg { width: 36px; height: 36px; }
.dock hr { flex: none; width: 1px; height: 32px; margin: 0 8px; border: 0; background: #687481; }
.run::after { content: ""; position: absolute; bottom: -7px; width: 4px; height: 4px; border-radius: 50%; background: #aec9dc; }
.dock .big::after { bottom: -5px; }
.badge i { position: absolute; top: -3px; right: -1px; width: 13px; height: 13px; border-radius: 50%; background: #f9101b; color: #fff; font: 9px/13px Inter, sans-serif; text-align: center; }
.dock text { text-anchor: middle; font-family: Inter, "Noto Sans CJK SC", sans-serif; }
.t7 { font-size: 7px; fill: #fff; }
.t16 { font-size: 15px; fill: #333; }
.office { font-size: 15px; font-weight: 700; fill: #fff; }
.iq { font-size: 9px; font-weight: 700; fill: #fff; }
```
FILE: charts.js
```js
// Plot data is stored in thirds of a pixel; each plot adds its own vertical origin.
const RED = '#fe0016', GREEN = '#00ab4e', VIOLET = '#5536f2', LIME = '#00f51d', ROSE = '#f00022';
const MA = { c5: '#ffaf13', c10: '#0a8cf5', c20: '#fb00b4', c30: '#00cbe6', c60: '#ff4d0b' };
const px = i => 108.5 + 7 * i;

function plot(id, top) {
  const svg = document.getElementById(id);
  const add = (tag, attrs, text) => {
    const el = document.createElementNS('http://www.w3.org/2000/svg', tag);
    for (const k in attrs) el.setAttribute(k, attrs[k]);
    if (text !== undefined) el.textContent = text;
    svg.appendChild(el);
  };
  return {
    add,
    y: v => top + v / 3,
    rect: (x, y, w, h, a) => add('rect', { x, y, width: w, height: h, ...a }),
    seg: (x1, y1, x2, y2, stroke, width = 1, dash = '') => add('line', { x1, y1, x2, y2, stroke, 'stroke-width': width, 'stroke-dasharray': dash }),
    text: (x, y, s, fill = '#1a1a1a', anchor = 'start', size = 12) => add('text', { x, y, fill, 'text-anchor': anchor, style: `font-size:${size}px` }, s),
    // parts: pairs of [x offset, "x,y x,y ..."]
    line(parts, stroke) {
      const pts = parts.flatMap(([dx, s]) => s.split(' ').map(p => {
        const [x, y] = p.split(',').map(Number);
        return ((x + dx) / 3).toFixed(1) + ',' + (top + y / 3).toFixed(1);
      }));
      add('polyline', { points: pts.join(' '), fill: 'none', stroke, 'stroke-width': 1.1 });
    }
  };
}

// high, body top, body bottom, low, colour
const candles = `408,424,458,470,g 475,480,542,552,g 488,493,514,541,r 450,499,508,520,r 472,484,491,501,g 460,460,484,486,r 432,439,460,472,r 437,444,449,460,g 448,456,471,486,g 430,432,470,486,r 384,388,439,460,r 390,393,437,440,g 413,413,455,456,r 383,409,416,430,r 428,430,557,586,g 498,502,556,558,r 435,486,501,503,r 430,439,499,500,r 412,430,452,470,g 470,478,488,535,g 484,489,521,530,g 497,532,542,546,g 480,485,526,538,r 484,495,536,540,g 520,538,545,600,r 530,539,578,598,g 562,570,645,648,g 598,625,631,656,r 560,562,616,625,r 524,538,560,575,r 550,560,590,600,r 530,547,592,594,r 532,536,548,566,r 534,536,570,588,g 558,565,569,585,r 560,563,596,598,g 570,584,590,596,r 566,572,592,616,r 466,505,580,585,r 424,433,496,498,r 397,415,445,460,r 400,424,427,455,r 396,400,428,430,r 307,355,409,415,r 363,380,385,415,r 318,380,410,425,g 355,368,401,460,r 375,378,428,446,g 398,421,445,447,r 247,265,352,390,r 160,220,277,350,r 146,191,230,237,r 163,175,191,214,r 163,170,191,200,r 81,133,166,180,r 105,108,191,206,g 101,142,214,222,r 124,128,174,178,g 150,157,175,253,r 107,121,166,190,r 123,123,188,204,g 230,249,341,360,g 309,316,341,352,r 260,271,317,336,r 236,256,275,285,r 222,241,257,298,r 230,233,298,306,g 292,306,326,350,g 282,290,322,334,r 285,291,295,334,r 298,302,344,346,g 332,339,364,366,g 296,313,340,346,r 308,311,375,383,g 352,376,402,425,g 448,460,468,484,r 437,459,463,488,g 461,463,515,520,g 486,498,524,537,g 427,429,541,543,r 424,437,451,468,r 409,424,436,444,r 402,410,430,455,r 420,431,435,440,r 388,395,422,430,r 364,385,406,408,r 365,380,383,398,r 403,420,458,460,g 362,370,475,477,r 334,357,371,398,g 372,410,431,470,g 368,376,430,468,r 361,363,458,466,g 452,465,513,522,g 475,489,494,545,r 492,511,557,562,g 490,493,577,590,r 396,400,481,483,r 396,405,449,460,g 445,458,476,485,g 505,517,531,562,r 488,501,540,556,g 540,552,623,640,g 616,627,635,696,g 583,592,643,645,r 560,570,599,608,g 526,528,574,586,r 508,525,529,558,r 532,537,545,555,g 524,541,547,556,r 527,529,564,566,g 556,564,569,590,g 533,541,567,577,r 513,520,574,576,r 490,516,535,548,g 503,507,529,544,r 481,498,508,516,g 451,454,496,498,r 465,465,510,512,g 485,497,517,530,r 494,499,522,525,g 517,519,557,562,g 516,534,548,562,r 514,516,530,546,r 515,518,522,560,g 490,510,532,546,g 536,538,548,572,r 496,501,505,520,g 502,507,512,536,g 528,535,539,556,r 536,543,548,556,g 534,540,544,552,g 542,546,587,592,g 571,581,586,588,r 574,576,586,588,g 535,572,585,588,r 558,560,584,586,g 558,560,580,582,r 573,575,594,598,g 598,600,624,628,g 612,616,622,632,r 606,616,628,652,r 600,600,626,628,r 600,602,608,654,r 600,604,610,622,g 585,594,632,638,g 615,627,630,644,r`
  .split(' ').map(s => s.split(','));

function drawPrice() {
  const p = plot('price', 140);
  for (const y of [155.5, 204.5, 253.5, 302.5, 352.5]) p.seg(105, y, 1155, y, '#efefef');
  p.seg(105.5, 147, 105.5, 399, '#e8eaec');
  p.seg(1155.5, 147, 1155.5, 399, '#e8eaec');
  [['14.00', 164], ['13.00', 209], ['12.00', 258], ['11.00', 307], ['10.00', 353]].forEach(([s, y]) => {
    p.text(102, y, s, undefined, 'end');
    p.text(1157, y, s);
  });
  candles.forEach(([hi, a, b, lo, c], i) => {
    const x = px(i), top = Math.round(p.y(+a)), h = Math.max(1, Math.round(p.y(+b)) - top);
    if (c === 'g' || h < 3) {
      const col = c === 'g' ? GREEN : RED;
      p.seg(x, p.y(+hi), x, p.y(+lo), col);
      p.rect(x - 2.5, top, 6, h, { fill: col });
    } else {
      p.seg(x, p.y(+hi), x, top, RED);
      p.seg(x, top + h, x, p.y(+lo), RED);
      p.rect(x - 2, top + .5, 5, h - 1, { fill: '#fff', stroke: RED });
    }
  });
  p.line([[0, '326,499 410,498 452,492 536,489 620,481 704,474 767,468 851,471 956,476 998,472'], [1050, '32,468 116,470 179,465 242,465 347,459 431,447 494,432 578,415 662,401 788,394 893,392 998,383'], [2100, '11,380 53,374 137,362 242,357 284,352 347,357 410,369 452,375 515,382 578,400 620,414 683,430 746,447 809,457 893,473 935,483 1019,496'], [3090, '49,500 133,510 218,525 302,532']], MA.c60);
  p.line([[0, '326,448 410,442 473,424 536,414 599,410 641,420 683,426 725,432 788,448 830,461 872,476 935,497 998,502 1040,508'], [1050, '52,520 179,520 242,506 284,506 347,478 410,447 452,414 494,382 536,353 620,324 662,295 725,278 788,271 872,274 914,281 956,295 998,318 1050,334'], [2100, '32,345 95,370 158,383 200,400 221,410 284,427 347,446 410,467 473,473 536,481 599,494 662,506 725,514 788,525 872,531 956,538 1035,535'], [3090, '49,540 175,545 302,555']], MA.c30);
  p.line([[0, '326,388 368,395 389,401 431,407 473,411 536,422 578,427 599,432 620,446 641,452 683,461 746,468 809,471 851,485 893,499 935,509 998,526 1050,537'], [1050, '31,550 94,553 137,540 179,522 200,516 242,490 284,480 326,450 368,428 410,389 452,340 494,296 536,268 599,256 641,250 662,237 704,223 725,223 746,227 788,245 830,270 872,305 914,344 956,368 998,377 1040,385'], [2100, '11,395 53,404 95,413 137,418 179,434 242,442 284,433 305,434 347,448 389,471 452,493 473,495 536,520 578,535 620,536 704,541 767,543 830,530 893,524 977,520 1035,530'], [3090, '133,545 218,560 302,580']], MA.c20);
  p.line([[0, '326,379 347,394 368,410 389,427 410,437 431,448 452,461 473,471 494,473 515,471 536,464 557,452 578,446 599,439 620,444 641,452 662,452 683,452 704,450 725,463 746,471 767,478 788,485 809,492 830,497 851,502 872,518 893,540 914,550 935,556 956,562 977,562 1019,566 1050,572'], [1050, '10,573 52,565 73,556 94,548 137,520 179,490 200,471 242,427 284,402 326,372 368,327 410,275 452,224 494,178 515,170 536,164 557,180 599,198 641,223 662,235 704,265 746,297 788,297 809,310 830,330 851,350 872,370 893,394 914,418 956,435 977,441 998,447 1040,448'], [2100, '0,445 32,435 53,424 74,410 116,404 137,400 158,402 200,425 242,450 263,446 305,463 347,483 368,505 389,520 431,533 452,537 473,549 515,566 557,571 599,552 641,541 683,524 746,515 788,514 830,511 872,518 935,527 977,530 1019,545'], [3090, '49,555 133,575 218,597 302,608']], MA.c10);
  p.line([[0, '326,410 347,440 368,468 389,487 410,496 431,488 452,474 473,465 494,461 515,452 536,432 557,433 578,428 599,415 620,440 641,463 662,468 683,481 704,487 725,478 746,480 767,487 788,490 809,515 830,523 851,537 872,565 893,585 914,590 956,587 977,562 998,546 1019,550 1040,556'], [1050, '31,574 52,577 73,565 94,540 116,493 137,455 158,420 179,405 200,393 221,391 242,382 263,390 284,402 305,380 326,340 347,290 368,240 389,200 410,180 431,170 452,161 473,159 536,155 557,192 578,221 599,245 620,274 641,288 662,278 683,284 704,278 725,290 746,297 767,315 788,318 809,333 830,360 851,382 872,404 893,440 914,472 935,477 956,474 977,465 998,445 1019,430 1040,423'], [2100, '0,411 32,401 53,407 74,395 95,390 116,401 158,400 179,430 200,455 221,480 242,501 263,490 284,479 305,472 326,466 347,475 368,520 389,556 410,582 431,595 452,595 473,577 494,557 515,547 536,543 557,546 578,549 599,550 620,545 641,540 662,520 683,505 704,502 725,493 746,498 767,510 788,522 809,524 830,530 872,533 893,530 914,527 935,527 956,537 977,542 998,552 1019,570'], [3090, '49,574 91,578 133,580 175,595 218,615 260,610 302,612']], MA.c5);

  p.rect(535, 209, 620, 4, { fill: '#c8c8c8' });
  p.seg(105, 167, 1155, 167, VIOLET, 2);
  p.seg(105, 266, 1155, 266, LIME, 2);
  p.seg(105, 283, 1155, 283, ROSE, 2);
  p.seg(105, 344, 1155, 344, ROSE, 2);
  p.seg(105, 356, 1155, 356, LIME, 2);
  p.seg(479.5, 147, 479.5, 399, '#0a8cf5', 1, '4 1');

  // run counters: x, y in thirds
  [[0, '429,431,1 449,403,2 470,407,3 494,417,4 512,397,5 533,356,6 557,364,7 575,383,8 743,560,1 764,573,2 785,570,3 806,571,4 827,630,5 848,628,6 870,676,7 890,685,8'],
   [1050, '73,436,1 92,391,2 113,366,3 134,370,4 155,365,5 176,278,6 197,330,7 217,290,8 682,380,1 703,370,2 722,370,3 743,370,4 767,394,5 785,374,6 806,413,7 829,458,8']].forEach(([dx, s]) =>
    s.split(' ').forEach(t => {
      const [x, y, n] = t.split(',');
      p.text((+x + dx) / 3, p.y(+y) + 4, n, undefined, 'middle', 10);
    }));
  [[198.5, 255, 1], [303.5, 356, 0], [429.5, 246, 1], [632.5, 313, 0]].forEach(([x, y, g]) => {
    const d = g ? `M${x - 4} ${y - 7}h8v11l-4 3-4-3z` : `M${x - 4} ${y + 7}h8v-11l-4-3-4 3z`;
    p.add('path', { d, fill: g ? '#83d3a5' : '#ff8290', stroke: g ? '#36a76a' : '#f5384c' });
    p.text(x, y + 4, '9', undefined, 'middle', 10);
  });

  const dot = (x, y1, y2, c) => p.seg(x, y1, x, y2, c, 2, '2 2');
  dot(248.5, 222, 370, VIOLET);
  dot(304.5, 232, 306, VIOLET);
  dot(374.5, 215, 294, VIOLET);
  dot(444.5, 205, 275, VIOLET);
  dot(528.5, 202, 300, VIOLET);
  dot(598.5, 248, 302, VIOLET);
  dot(479.5, 203, 234, ROSE);
  dot(486.5, 200, 295, ROSE);
  dot(521.5, 197, 236, ROSE);

  const ring = { fill: 'none', stroke: VIOLET, 'stroke-width': 2 };
  const box = (x, y, w, h, c, s) => {
    p.rect(x, y, w, h, { fill: c === ROSE ? 'none' : '#fff', stroke: c, 'stroke-width': 2 });
    if (s) p.text(x + w / 2, y + h / 2 + 5, s, undefined, 'middle', 13);
  };
  box(174, 197, 75, 25, VIOLET, '百日低量群');
  box(257, 207, 48, 25, VIOLET, '黄金柱');
  box(327, 190, 48, 25, VIOLET, '将军柱');
  box(397, 180, 48, 25, VIOLET, '将军柱');
  box(445, 234, 35, 25, ROSE, '建仓');
  box(487, 237, 35, 25, ROSE, '增仓');
  box(452, 295, 35, 25, ROSE, '增仓');
  box(494, 300, 35, 25, VIOLET, '卖出');
  box(564, 302, 35, 25, VIOLET, '卖出');
  p.rect(368, 360, 14, 22, ring);
  p.rect(431, 360, 14, 21, ring);
  p.rect(480, 360, 21, 19, ring);
  p.add('circle', { cx: 304.5, cy: 307, r: 16, ...ring });
  p.add('circle', { cx: 381.5, cy: 258, r: 17, ...ring });
  p.add('circle', { cx: 451.5, cy: 200, r: 14, ...ring });
  p.add('ellipse', { cx: 252, cy: 369.5, rx: 108.5, ry: 8, ...ring });

  p.text(500, 171, '13.77');
  p.text(537, 204, '12.92—12.83');
  p.text(843, 377, '9.59');
  for (const [x, y] of [[489, 167], [832, 373]]) p.add('path', { d: `M${x + 10} ${y}h-9m3-3l-3 3 3 3`, fill: 'none', stroke: '#1a1a1a' });

  [[213.5, 'L', 1], [262.5, 'L', 0], [283.5, 'L', 1], [297.5, 'L', 1], [304.5, 'L', 1], [647.5, 'Q', 1], [717.5, 'L', 0], [822.5, 'L', 0], [829.5, 'L', 1], [1116.5, 'L', 1], [1130.5, 'L', 1]].forEach(([x, s, r]) => {
    p.add('circle', { cx: x, cy: 390.5, r: 6, fill: '#fff', stroke: r ? '#ff4a5a' : '#4cc584' });
    p.text(x, 394.5, s, r ? RED : GREEN, 'middle', 11);
  });
}

function drawVolume() {
  const p = plot('volume', 400);
  for (const y of [419.5, 450.5, 482.5]) p.seg(105, y, 1155, y, '#ececec');
  p.seg(105.5, 419, 105.5, 514, '#e8eaec');
  p.seg(1155.5, 419, 1155.5, 514, '#e8eaec');
  [['62.24', 428], ['41.50', 455], ['20.75', 487]].forEach(([s, y]) => {
    p.text(102, y, s, undefined, 'end');
    p.text(1157, y, s);
  });
  p.text(102, 513, '万', undefined, 'end', 11);
  p.text(1158, 513, '万', undefined, 'start', 11);
  `297g 286g 290r 293r 300g 300r 306r 312g 312g 291r 283r 299g 303r 292r 267g 295r 289r 297r 306g 297g 303g 312g 305r 300g 294r 303g 291g 309r 302r 288r 300r 295r 303r 301g 309g 312g 318r 306r 261r 216r 255r 288r 276r 195r 264r 237g 207r 258g 273r 141r 57r 177r 240r 234r 192r 240g 210r 264g 249r 231r 264g 126g 246r 252r 279r 282r 288g 282g 291r 288r 300g 312g 289r 297g 294g 288r 291g 279g 291g 267r 285r 300r 291r 309r 294r 297r 297r 292g 258r 291g 279g 270r 276g 285g 306r 303g 297r 279r 275g 300g 297r 297g 252g 270g 261r 246g 237r 273r 297g 294r 303g 312g 309r 285r 276g 297r 267g 258r 276g 300r 306g 306g 312r 312r 308g 303g 312r 291g 297g 309r 315g 321g 310g 321r 318g 288r 303g 300r 308g 303g 321r 309r 321r 303r 327g 318g 327r`
    .split(' ').forEach((s, i) => {
      const top = Math.round(p.y(parseInt(s)));
      p.rect(px(i) - 2.5, top, 5, 514 - top, { fill: s.endsWith('g') ? GREEN : RED });
    });
  p.line([[0, '326,289 389,292 431,294 494,304 515,304 557,295 599,292 641,289 704,289 746,297 809,305 872,300 935,300 1019,298 1061,305 1103,310 1124,300 1145,282 1166,272 1187,264 1208,260 1229,243'], [1200, '49,254 70,248 91,235 112,233 133,247 154,225 175,188 196,181 217,178 238,169 259,179 280,213 301,224 343,229 385,244 406,226 448,223 490,237 511,268 532,279 595,290 616,295 700,294 763,287 847,288 889,295 952,294 1015,285 1057,276 1099,284 1141,292 1183,292'], [2400, '0,290 46,288 88,283 109,275 151,253 172,255 214,268 235,280 256,294 277,301 298,300 340,292 361,286 382,275 424,280 445,281 487,302 571,310 613,302 676,306 739,316 781,308 844,302 886,309 928,311 991,320']], MA.c5);
  p.line([[0, '326,283 389,284 431,292 494,298 557,298 641,293 704,292 767,294 851,299 935,301 1019,298 1103,304 1145,292 1208,283'], [1200, '49,268 70,262 112,244 133,247 154,237 175,220 196,208 238,208 259,203 322,202 343,199 364,209 385,229 406,225 448,226 469,235 511,248 595,263 616,280 679,292 763,291 847,287 952,292 1057,285 1141,284 1200,288'], [2400, '25,290 88,289 151,271 235,271 277,280 382,289 424,288 466,287 508,290 571,299 655,306 739,308 823,310 886,309 949,307 991,314']], MA.c10);
  p.line([[0, '326,277 431,279 515,285 641,287 851,286 1000,289 1103,289 1200,284'], [1200, '49,284 133,283 238,277 343,273 427,271 784,271 847,274 1200,274'], [2400, '340,274 382,272 508,271 571,274 886,275 949,278 991,281']], MA.c20);
  p.seg(479.5, 419, 479.5, 478, '#0a8cf5', 1, '4 1');
}

function drawMacd() {
  const p = plot('macd', 400);
  for (const y of [565.5, 597.5, 628.5]) p.seg(105, y, 1155, y, '#ececec');
  p.seg(105.5, 534, 105.5, 628, '#e8eaec');
  p.seg(1155.5, 534, 1155.5, 628, '#e8eaec');
  `627 657 660 660 654 639 624 612 609 594 576 575 570 568 597 606 603 591 585 590 596 600 597 601 603 612 630 633 618 597 588 579 567 568 568 570 570 570 552 522 501 492 486 477 480 495 498 519 534 510 489 474 468 470 468 489 498 516 531 534 558 615 645 651 648 642 651 660 654 651 654 660 648 651 657 672 675 684 687 657 639 618 597 588 570 558 549 561 546 540 549 543 561 585 591 612 606 576 570 570 579 591 615 630 627 621 597 579 570 561 561 561 555 546 543 534 531 516 522 528 537 552 558 558 561 564 567 561 558 564 570 570 585 591 594 588 588 584 585 594 597 594 591 585 582 585 585`
    .split(' ').forEach((v, i) => p.seg(px(i), 591, px(i), p.y(+v), +v > 573 ? GREEN : RED));
  p.line([[0, '326,526 347,549 368,562 389,575 410,580 431,584 452,580 494,580 536,568 599,562 620,581 641,590 662,593 683,587 725,589 767,604 788,606 809,610 830,613 851,621 872,635 893,646 914,646 935,637 977,631 1019,626 1103,623 1124,610 1145,590 1166,571 1187,556 1229,523'], [1200, '49,514 70,514 91,505 133,511 175,470 217,433 259,407 301,404 343,406 364,404 385,412 406,446 427,469 448,481 490,497 532,526 553,532 595,552 616,568 637,571 658,580 679,595 721,628 763,661 826,653 868,644 931,616 952,623 994,604 1015,604 1036,598 1057,605 1078,619 1099,626 1120,640 1141,640 1162,625'], [2400, '0,623 46,633 88,667 130,673 172,655 214,646 256,643 277,637 298,628 340,616 361,607 382,592 424,587 445,587 466,592 508,590 571,590 613,584 655,587 697,596 739,604 802,604 844,613 886,619 949,617 991,622']], MA.c5);
  p.line([[0, '326,499 347,508 389,533 431,550 473,559 515,568 557,569 599,565 620,570 641,574 683,578 746,584 788,592 830,598 872,610 893,619 956,628 1019,628 1103,625 1145,616 1187,599'], [1200, '0,590 49,563 112,535 133,532 175,512 217,488 259,461 301,440 364,422 385,422 406,424 448,446 532,482 553,493 616,522 658,541 721,577 763,602 805,625 826,631 889,634 973,626 1036,613 1099,616 1141,625 1200,623'], [2400, '46,626 88,637 130,652 172,655 256,649 319,640 382,620 445,604 487,601 571,595 613,590 697,590 739,596 823,602 886,610 949,614 991,616']], MA.c10);
  p.seg(105, 534.5, 1155, 534.5, '#0a8cf5', 1, '4 1');
  p.seg(479.5, 535, 479.5, 629, '#0a8cf5', 1, '4 1');
  const mark = { fill: '#cfe5fd', stroke: '#5db4fc' };
  p.rect(77.5, 534.5, 27, 18, mark);
  p.rect(1155.5, 534.5, 27, 18, mark);
  [['0.62', 548, '#1a1a1a'], ['0.28', 570, RED], ['-0.07', 602, GREEN], ['-0.41', 629, GREEN]].forEach(([s, y, c]) => {
    p.text(102, y, s, c, 'end');
    p.text(1157, y, s, c);
  });
  p.rect(450.5, 629.5, 57, 19, mark);
  [['2018/05', 107], ['07', 268.5], ['08', 422.5], ['20180813', 479], ['09', 584.5], ['10', 716.5], ['11', 843], ['12', 997]].forEach(([s, x]) => p.text(x, 643, s, undefined, 'middle'));
}

function drawChips() {
  const p = plot('chips', 140);
  [540, 561, 618, 723, 828, 891, 867, 789, 750, 702, 642, 621, 633, 645, 639, 612, 594, 588, 603, 633, 684, 714, 729, 771, 840, 864, 882, 915, 951, 993, 1008, 927, 855, 825, 807, 789, 807, 795, 783, 792, 846, 840, 780, 759, 798, 858, 828, 810, 819, 780, 732, 681, 609, 594, 600, 567, 552, 555, 555, 540, 537, 534, 534, 534, 531, 531]
    .forEach((r, i) => p.rect(1206, Math.round(189 + i * 2.93), (r - 528) / 3, 2, { fill: i < 2 ? '#0a8cf5' : RED }));
  p.rect(1206, 279, 147, 1, { fill: '#111' });
}

drawPrice();
drawVolume();
drawMacd();
drawChips();
```
